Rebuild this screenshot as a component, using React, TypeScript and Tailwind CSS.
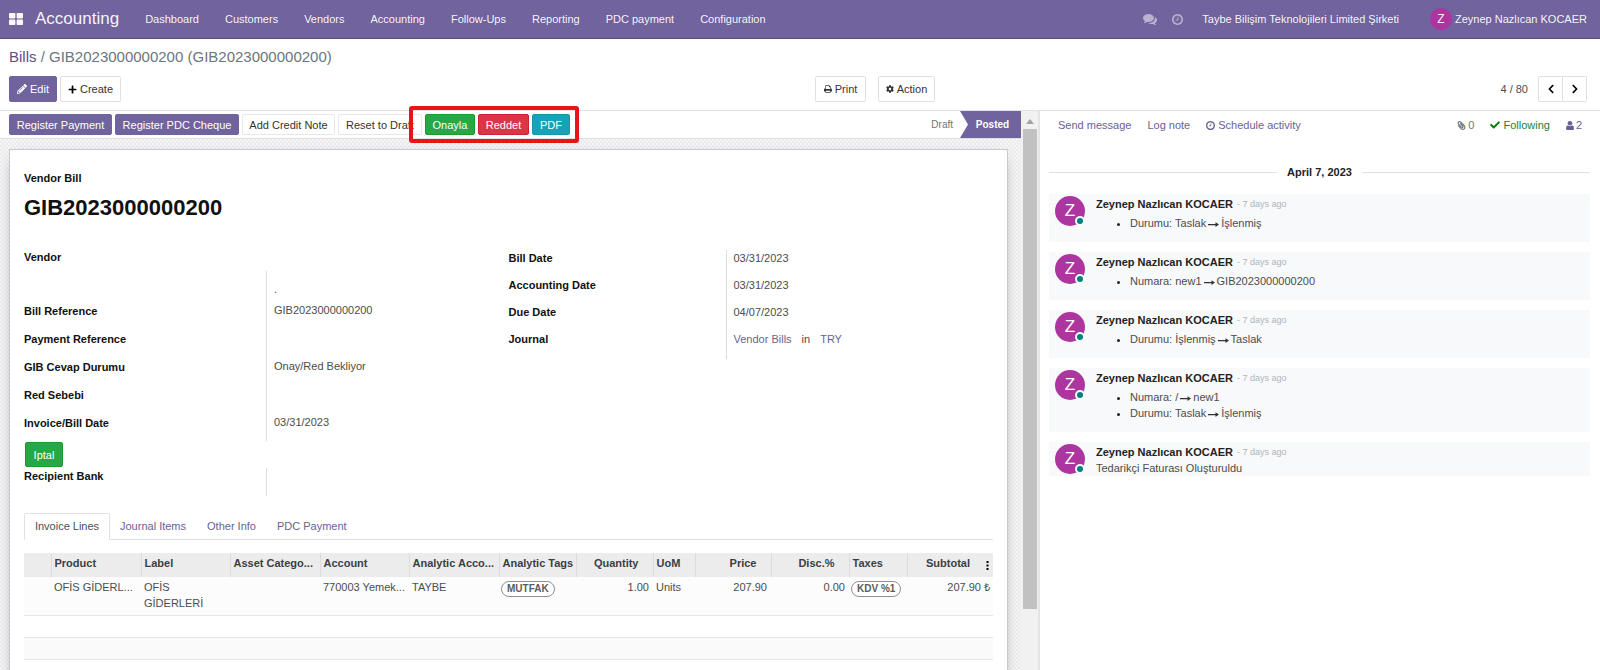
import type { ReactNode } from 'react'
import { FaCheck, FaChevronLeft, FaChevronRight, FaCog, FaPaperclip, FaPencilAlt, FaPlus } from 'react-icons/fa'

const MENU = ['Dashboard', 'Customers', 'Vendors', 'Accounting', 'Follow-Ups', 'Reporting', 'PDC payment', 'Configuration']

const LEFT_FIELDS = [
  { label: 'Bill Reference', value: 'GIB2023000000200' },
  { label: 'Payment Reference', value: '' },
  { label: 'GIB Cevap Durumu', value: 'Onay/Red Bekliyor' },
  { label: 'Red Sebebi', value: '' },
  { label: 'Invoice/Bill Date', value: '03/31/2023' },
]

const RIGHT_FIELDS = [
  { label: 'Bill Date', value: '03/31/2023' },
  { label: 'Accounting Date', value: '03/31/2023' },
  { label: 'Due Date', value: '04/07/2023' },
]

const COLUMNS = [
  { label: '', col: 'w-[27px]', align: 'text-left' },
  { label: 'Product', col: 'w-[90px]', align: 'text-left' },
  { label: 'Label', col: 'w-[89px]', align: 'text-left' },
  { label: 'Asset Catego...', col: 'w-[90px]', align: 'text-left' },
  { label: 'Account', col: 'w-[89px]', align: 'text-left' },
  { label: 'Analytic Acco...', col: 'w-[90px]', align: 'text-left' },
  { label: 'Analytic Tags', col: 'w-[77px]', align: 'text-left' },
  { label: 'Quantity', col: 'w-[77px]', align: 'text-right pr-[14px]' },
  { label: 'UoM', col: 'w-[42px]', align: 'text-left' },
  { label: 'Price', col: 'w-[76px]', align: 'text-right pr-[14px]' },
  { label: 'Disc.%', col: 'w-[78px]', align: 'text-right pr-[14px]' },
  { label: 'Taxes', col: 'w-[58px]', align: 'text-left' },
]

const MESSAGES = [
  { items: [['Durumu: Taslak', 'İşlenmiş']] },
  { items: [['Numara: new1', 'GIB2023000000200']] },
  { items: [['Durumu: İşlenmiş', 'Taslak']] },
  { items: [['Numara: /', 'new1'], ['Durumu: Taslak', 'İşlenmiş']] },
  { items: [], body: 'Tedarikçi Faturası Oluşturuldu' },
]

function ClockIcon({ className }: { className: string }) {
  return (
    <svg className={className} viewBox="0 128 1536 1536" fill="currentColor">
      <path d="M896 544v448q0 14-9 23t-23 9h-320q-14 0-23-9t-9-23v-64q0-14 9-23t23-9h224v-352q0-14 9-23t23-9h64q14 0 23 9t9 23zm416 352q0-148-73-273t-198-198-273-73-273 73-198 198-73 273 73 273 198 198 273 73 273-73 198-198 73-273zm224 0q0 209-103 385.5t-279.5 279.5-385.5 103-385.5-103-279.5-279.5-103-385.5 103-385.5 279.5-279.5 385.5-103 385.5 103 279.5 279.5 103 385.5z" />
    </svg>
  )
}

function CommentsIcon() {
  return (
    <svg className="w-[14px] h-[14px]" viewBox="0 0 1792 1792" fill="currentColor">
      <path d="M1408 768q0 139-94 257t-256.5 186.5-353.5 68.5q-86 0-176-16-124 88-278 128-36 9-86 16h-3q-11 0-20.5-8t-11.5-21q-1-3-1-6.5t.5-6.5 2-6l2.5-5 3.5-5.5 4-5 4.5-5 4-4.5q5-6 23-25t26-29.5 22.5-29 25-38.5 20.5-44q-124-72-195-177t-71-224q0-139 94-257t256.5-186.5 353.5-68.5 353.5 68.5 256.5 186.5 94 257zm384 256q0 120-71 224.5t-195 176.5q10 24 20.5 44t25 38.5 22.5 29 26 29.5 23 25q1 1 4 4.5t4.5 5 4 5 3.5 5.5l2.5 5 2 6 .5 6.5-1 6.5q-3 14-13 22t-22 7q-50-7-86-16-154-40-278-128-90 16-176 16-271 0-472-132 58 4 88 4 161 0 309-45t264-129q125-92 192-212t67-254q0-77-23-152 129 71 204 178t75 230z" />
    </svg>
  )
}

function PrintIcon() {
  return (
    <svg className="w-2 h-2" viewBox="0 64 1664 1664" fill="currentColor">
      <path d="M384 1536h896v-256h-896v256zm0-640h896v-384h-160q-40 0-68-28t-28-68v-160h-640v640zm1152 64q0-26-19-45t-45-19-45 19-19 45 19 45 45 19 45-19 19-45zm128 0v416q0 13-9.5 22.5t-22.5 9.5h-224v160q0 40-28 68t-68 28h-960q-40 0-68-28t-28-68v-160h-224q-13 0-22.5-9.5t-9.5-22.5v-416q0-79 56.5-135.5t135.5-56.5h64v-544q0-40 28-68t68-28h672q40 0 88 20t76 48l152 152q28 28 48 76t20 88v256h64q79 0 135.5 56.5t56.5 135.5z" />
    </svg>
  )
}

function UserIcon() {
  return (
    <svg className="w-2 h-[9px]" viewBox="0 0 8 9" fill="currentColor">
      <circle cx="4" cy="2.3" r="2.3" />
      <path d="M1.8 4.2Q4 6 6.2 4.2 8 4.6 8 7.4 8 9 6.6 9H1.4Q0 9 0 7.4 0 4.6 1.8 4.2z" />
    </svg>
  )
}

function ArrowIcon() {
  return (
    <svg className="inline-block w-[11px] h-[7px] mx-[2px]" viewBox="0 0 11 7" fill="#333">
      <path d="M0 3h7.500V1.200L11 3.600 7.500 6V4.200H0z" />
    </svg>
  )
}

function Button({ className, children }: { className: string; children: ReactNode }) {
  return (
    <button className={`flex items-center justify-center border rounded-[2px] whitespace-nowrap cursor-pointer ${className}`}>
      {children}
    </button>
  )
}

function Navbar() {
  return (
    <header className="h-[39px] shrink-0 flex items-center bg-[#71639e] border-b border-[#5a4f7f] text-white/95 pl-[9px] pr-[13px]">
      <button aria-label="Apps" className="cursor-pointer">
        <svg className="w-[14px] h-3" viewBox="0 0 14 12" fill="currentColor">
          <rect x="0" y="0" width="6.4" height="5.4" rx="0.8" />
          <rect x="7.6" y="0" width="6.4" height="5.4" rx="0.8" />
          <rect x="0" y="6.6" width="6.4" height="5.4" rx="0.8" />
          <rect x="7.6" y="6.6" width="6.4" height="5.4" rx="0.8" />
        </svg>
      </button>
      <a href="#" className="ml-3 text-[17px]">Accounting</a>
      <nav className="flex items-center gap-[26px] ml-[26px]">
        {MENU.map(item => <a key={item} href="#">{item}</a>)}
      </nav>
      <div className="ml-auto flex items-center">
        <button aria-label="Messages" className="text-white/50 cursor-pointer"><CommentsIcon /></button>
        <button aria-label="Activities" className="ml-[15px] text-white/50 cursor-pointer"><ClockIcon className="w-[11px] h-[11px]" /></button>
        <a href="#" className="ml-[19px]">Taybe Bilişim Teknolojileri Limited Şirketi</a>
        <button className="ml-[31px] flex items-center gap-[3px] cursor-pointer">
          <span className="size-[22px] rounded-full bg-[#ad35a0] flex items-center justify-center text-xs">Z</span>
          Zeynep Nazlıcan KOCAER
        </button>
      </div>
    </header>
  )
}

function ControlPanel() {
  return (
    <div className="shrink-0 h-[72px] border-b border-[#dee2e6] pl-[9px] pr-[13px] flex flex-col">
      <div className="text-[15px] leading-[18px] mt-[9px] text-[#6c757d]">
        <a href="#" className="text-[#5c5080]">Bills</a> / GIB2023000000200 (GIB2023000000200)
      </div>
      <div className="grid grid-cols-[1fr_auto_1fr] mt-[10px] h-[26px]">
        <div className="flex gap-[3px]">
          <Button className="w-12 gap-[3px] bg-[#71639e] border-[#71639e] text-white"><FaPencilAlt size={10} />Edit</Button>
          <Button className="w-[61px] gap-[3px] border-[#dee2e6] text-[#333]"><FaPlus size={9} className="text-black" />Create</Button>
        </div>
        <div className="flex gap-3 pl-[154px]">
          <Button className="w-[51px] gap-[3px] border-[#dee2e6] text-[#333]"><PrintIcon />Print</Button>
          <Button className="w-[57px] gap-[3px] border-[#dee2e6] text-[#333]"><FaCog size={8} />Action</Button>
        </div>
        <div className="flex justify-end items-center">
          <span className="mr-[10px] text-[#4c4c4c]">4 / 80</span>
          <button aria-label="Previous" className="w-[25px] h-[26px] flex items-center justify-center border border-[#dee2e6] rounded-l-[2px] text-black"><FaChevronLeft size={10} /></button>
          <button aria-label="Next" className="w-6 h-[26px] flex items-center justify-center border border-l-0 border-[#dee2e6] rounded-r-[2px] text-black"><FaChevronRight size={10} /></button>
        </div>
      </div>
    </div>
  )
}

function StatusBar() {
  return (
    <div className="h-7 shrink-0 flex justify-between bg-white border-b border-[#dee2e6] pl-[9px]">
      <div className="flex gap-[3px] pt-[3px] h-6">
        <Button className="w-[103px] bg-[#71639e] border-[#71639e] text-white">Register Payment</Button>
        <Button className="w-[124px] bg-[#71639e] border-[#71639e] text-white">Register PDC Cheque</Button>
        <Button className="w-[93px] border-[#e6e8eb] text-[#333]">Add Credit Note</Button>
        <Button className="w-[84px] border-[#e6e8eb] text-[#333]">Reset to Draft</Button>
        <div className="relative flex gap-[3px]">
          <Button className="w-[50px] bg-[#28a745] border-[#1c9a2c] text-white">Onayla</Button>
          <Button className="w-[51px] bg-[#dc3545] border-[#d01f38] text-white">Reddet</Button>
          <Button className="w-[38px] bg-[#17a2b8] border-[#1497ad] text-white">PDF</Button>
          {/* Highlight around the approval buttons */}
          <div className="absolute z-10 -top-2 -bottom-2 -left-4 -right-[9px] border-4 border-[#ea1317] rounded-[3px] pointer-events-none" />
        </div>
      </div>
      <div className="flex items-stretch text-[10px]">
        <span className="flex items-center px-[7px] text-[#6c757d]">Draft</span>
        <span className="flex items-center w-[61px] justify-center pl-1 bg-[#71639e] text-white font-bold [clip-path:polygon(0_0,100%_0,100%_100%,0_100%,8px_50%)]">Posted</span>
      </div>
    </div>
  )
}

function Fields() {
  return (
    <div className="grid grid-cols-2 mt-7">
      <div>
        <div className="font-bold text-[#111] h-[22px]">Vendor</div>
        <div className="flex">
          <div className="w-[242px] h-6" />
          <div className="border-l border-[#dcdcdc] pl-[7px] pt-[10px]">.</div>
        </div>
        <div>
          {LEFT_FIELDS.map(f => (
            <div key={f.label} className="flex h-7 last:h-8">
              <div className="w-[242px] font-bold text-[#111] pt-[6px]">{f.label}</div>
              <div className="border-l border-[#dcdcdc] pl-[7px] pt-[5px]">{f.value}</div>
            </div>
          ))}
        </div>
        <Button className="w-[38px] h-[25px] mt-px ml-px bg-[#28a745] border-[#1c9a2c] text-white">Iptal</Button>
        <div className="flex h-7 mt-px">
          <div className="w-[242px] font-bold text-[#111]">Recipient Bank</div>
          <div className="border-l border-[#dcdcdc]" />
        </div>
      </div>
      <div className="mt-px">
        {RIGHT_FIELDS.map(f => (
          <div key={f.label} className="flex h-[27px]">
            <div className="w-[217px] font-bold text-[#111]">{f.label}</div>
            <div className="border-l border-[#dcdcdc] pl-[7px]">{f.value}</div>
          </div>
        ))}
        <div className="flex h-7">
          <div className="w-[217px] font-bold text-[#111]">Journal</div>
          <div className="border-l border-[#dcdcdc] pl-[7px] flex gap-[10px]">
            <a href="#" className="text-[#6a5f94]">Vendor Bills</a>
            <span>in</span>
            <a href="#" className="text-[#6a5f94]">TRY</a>
          </div>
        </div>
      </div>
    </div>
  )
}

function Tag({ children }: { children: ReactNode }) {
  return (
    <span className="inline-flex items-center h-4 px-[5px] border border-[#8f8f8f] rounded-full bg-white text-[10px] font-bold text-[#5c5c5c] whitespace-nowrap">
      {children}
    </span>
  )
}

function InvoiceLines() {
  return (
    <table className="w-full table-fixed mt-[13px] border-collapse">
      <colgroup>
        {COLUMNS.map(c => <col key={c.label} className={c.col} />)}
        <col />
      </colgroup>
      <thead>
        <tr className="h-6 bg-[#ececec] text-[#3a3f44] align-top">
          {COLUMNS.map(c => (
            <th key={c.label} className={`border-r border-[#dcdcdc] pl-[3px] pt-[2px] font-bold whitespace-nowrap ${c.align}`}>{c.label}</th>
          ))}
          <th className="pt-[2px] font-bold">
            <div className="flex justify-end gap-4 pr-1">
              Subtotal
              <button aria-label="Optional columns" className="pt-[5px] text-black">
                <svg className="w-[3px] h-[9px]" viewBox="0 0 3 9" fill="currentColor">
                  <rect x="0.5" y="0" width="2" height="2" />
                  <rect x="0.5" y="3.500" width="2" height="2" />
                  <rect x="0.5" y="7" width="2" height="2" />
                </svg>
              </button>
            </div>
          </th>
        </tr>
      </thead>
      <tbody>
        <tr className="h-[38px] align-top bg-[#fcfcfc] border-b border-[#e6e6e6]">
          <td />
          <td className="pl-[3px] pt-[2px] whitespace-nowrap">OFİS GİDERL...</td>
          <td className="pl-[3px] pt-[2px]">OFİS<br />GİDERLERİ</td>
          <td />
          <td className="pl-[3px] pt-[2px] whitespace-nowrap">770003 Yemek...</td>
          <td className="pl-[3px] pt-[2px]">TAYBE</td>
          <td className="pl-[2px] pt-[3px]"><Tag>MUTFAK</Tag></td>
          <td className="pr-1 pt-[2px] text-right">1.00</td>
          <td className="pl-[3px] pt-[2px]">Units</td>
          <td className="pr-1 pt-[2px] text-right">207.90</td>
          <td className="pr-1 pt-[2px] text-right">0.00</td>
          <td className="pl-[2px] pt-[3px]"><Tag>KDV %1</Tag></td>
          <td className="pr-[3px] pt-[2px] text-right">207.90 ₺</td>
        </tr>
        <tr className="h-[22px] border-b border-[#e6e6e6]"><td colSpan={13} /></tr>
        <tr className="h-[22px] bg-[#fafafa] border-b border-[#e6e6e6]"><td colSpan={13} /></tr>
        <tr className="h-[22px] border-b border-[#e6e6e6]"><td colSpan={13} /></tr>
      </tbody>
    </table>
  )
}

function Sheet() {
  return (
    <div className="ml-[9px] mr-[13px] mt-[10px] flex-1 bg-white border border-[#c8c8d3] px-[14px] pt-5 shadow-[0_4px_14px_-8px_rgba(0,0,0,.7)]">
      <div className="font-bold text-[#111]">Vendor Bill</div>
      <h1 className="text-[22px] leading-[26px] font-bold text-[#111] mt-[9px]">GIB2023000000200</h1>
      <Fields />
      <div role="tablist" className="flex mt-[17px] h-[27px] border-b border-[#dee2e6]">
        <button role="tab" aria-selected="true" className="h-[27px] w-[86px] pb-px bg-white border border-b-white border-[#dee2e6] rounded-t-[2px] text-[#495057]">Invoice Lines</button>
        <button role="tab" className="px-[10px] text-[#6a5f94]">Journal Items</button>
        <button role="tab" className="px-[11px] text-[#6a5f94]">Other Info</button>
        <button role="tab" className="px-[10px] text-[#6a5f94]">PDC Payment</button>
      </div>
      <InvoiceLines />
    </div>
  )
}

function Chatter() {
  return (
    <aside className="w-[560px] shrink-0 pl-[9px] pr-[10px] text-[#4c4c4c]">
      <div className="flex items-center h-7 pl-[9px] pr-2 text-[#6a5f94]">
        <button>Send message</button>
        <button className="ml-4">Log note</button>
        <button className="ml-4 flex items-center gap-[3px]"><ClockIcon className="w-[9px] h-[9px]" />Schedule activity</button>
        <button className="ml-auto flex items-center gap-[2px] text-[#6c757d]"><FaPaperclip size={9} className="-scale-x-100" />0</button>
        <button className="ml-4 flex items-center gap-[3px] text-[#1e7e34]"><FaCheck size={10} className="text-[#008000]" />Following</button>
        <button className="ml-4 flex items-center gap-[2px]"><UserIcon />2</button>
      </div>
      <div className="flex items-center gap-[10px] mt-[25px] font-bold text-[#222]">
        <hr className="flex-1 border-[#dee2e6]" />
        April 7, 2023
        <hr className="flex-1 border-[#dee2e6]" />
      </div>
      <div className="flex flex-col gap-[10px] mt-[14px]">
        {MESSAGES.map((m, i) => (
          <div key={i} className="flex gap-[11px] pl-[6px] pt-[2px] bg-[#f8f9fa]">
            <div className="relative size-[30px] shrink-0 rounded-full bg-[#ad35a0] text-white text-[17px] flex items-center justify-center">
              Z
              <span className="absolute right-0 bottom-0 size-[10px] rounded-full bg-[#008080] border-2 border-[#f8f9fa]" />
            </div>
            <div>
              <div className="flex items-center">
                <span className="font-bold text-[#222]">Zeynep Nazlıcan KOCAER</span>
                <span className="ml-1 text-[9px] text-[#adb5bd]">- 7 days ago</span>
              </div>
              {m.body && <p>{m.body}</p>}
              {m.items.length > 0 && (
                <ul className="list-disc pl-[34px] pt-[3px] pb-[11px]">
                  {m.items.map(([from, to]) => (
                    <li key={from} className="marker:text-[#222]">{from}<ArrowIcon />{to}</li>
                  ))}
                </ul>
              )}
            </div>
          </div>
        ))}
      </div>
    </aside>
  )
}

export default function App() {
  return (
    <div className="h-screen overflow-hidden flex flex-col bg-white text-[11px] leading-4 text-[#4c4c4c] font-['Liberation_Sans',Arial,sans-serif]">
      <Navbar />
      <ControlPanel />
      <main className="flex-1 min-h-0 flex">
        <div className="flex-1 min-w-0 flex flex-col bg-[conic-gradient(#ebebeb_25%,#f6f6f6_0_50%,#ebebeb_0_75%,#f6f6f6_0)] bg-[length:4px_4px]">
          <StatusBar />
          <Sheet />
        </div>
        {/* Scrollbar */}
        <div className="w-[19px] shrink-0 bg-[#f1f1f1] border-r-2 border-[#e3e4e8] flex flex-col items-center">
          <svg className="w-2 h-[5px] mt-2 mb-[5px] shrink-0" viewBox="0 0 8 5" fill="#a3a3a3">
            <path d="M4 0l4 5H0z" />
          </svg>
          <div className="w-[14px] h-[480px] bg-[#c1c1c1]" />
        </div>
        <Chatter />
      </main>
    </div>
  )
}
